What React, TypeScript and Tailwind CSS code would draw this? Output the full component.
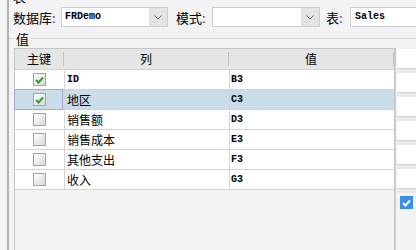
import React from 'react';

const rows = [
  { key: true, col: 'ID', val: 'B3' },
  { key: true, col: '地区', val: 'C3', selected: true },
  { key: false, col: '销售额', val: 'D3' },
  { key: false, col: '销售成本', val: 'E3' },
  { key: false, col: '其他支出', val: 'F3' },
  { key: false, col: '收入', val: 'G3' },
];

const isLatin = (s: string) => /^[\x00-\x7F]+$/.test(s);

const Colon = () => <span className="text-[#8a1a9a]">:</span>;

const Chevron = () => (
  <svg width="8" height="5" viewBox="0 0 8 5">
    <path d="M0.5 0.5 L4 4 L7.5 0.5" stroke="#6e6e6e" strokeWidth="1" fill="none" />
  </svg>
);

const Combo: React.FC<{ width: string; value?: string }> = ({ width, value }) => (
  <div className={`flex h-full shrink-0 ${width} border border-[#cfcfcf] bg-white`}>
    <div className="flex flex-1 items-center pl-[3px] font-['Liberation_Mono',monospace] text-[10px] font-bold">
      {value}
    </div>
    <div className="flex w-[18px] items-center justify-center bg-[#e3e3e3]">
      <Chevron />
    </div>
  </div>
);

const CheckBox: React.FC<{ checked: boolean }> = ({ checked }) => (
  <span className="flex h-[13px] w-[13px] items-center justify-center border border-[#a3a3a3] bg-linear-to-br from-white to-[#dadada]">
    {checked && (
      <svg width="9" height="8" viewBox="0 0 9 8">
        <path d="M1 4 L3.5 6.5 L8 1.5" stroke="#22a622" strokeWidth="2" fill="none" />
      </svg>
    )}
  </span>
);

const HeaderDivider = () => <div className="my-auto h-[14px] w-px bg-[#c2c2c2]" />;

export default function App() {
  return (
    <div className="h-[250px] w-[416px] overflow-hidden bg-[#f3f3f5] font-['Noto_Sans_CJK_SC',sans-serif] text-black">
      <div className="ml-[7px] flex h-full flex-col border-l-2 border-[#b3b3b3]">
        <div className="-mt-[10px] h-[14px] pl-[4px] text-[13px] leading-[14px]">表</div>

        {/* database / schema / table fields */}
        <div className="mt-[3px] flex h-[20px] shrink-0 items-center pl-[4px] text-[13px] leading-none">
          <span className="w-[48px] shrink-0">数据库<Colon /></span>
          <Combo width="w-[107px]" value="FRDemo" />
          <span className="ml-[8px] w-[36px] shrink-0">模式<Colon /></span>
          <Combo width="w-[108px]" />
          <span className="ml-[6px] w-[24px] shrink-0">表<Colon /></span>
          <div className="flex h-full w-[90px] shrink-0 items-center border border-[#cfcfcf] bg-white pl-[4px] font-['Liberation_Mono',monospace] text-[10px] font-bold">
            Sales
          </div>
        </div>

        {/* 值 group title */}
        <div className="mt-[1px] flex h-[20px] shrink-0 items-center">
          <div className="h-px w-[5px] bg-[#d6d6d6]" />
          <span className="px-[2px] text-[13px] leading-none">值</span>
          <div className="h-px flex-1 bg-[#d6d6d6]" />
        </div>

        <div className="flex min-h-0 flex-1">
          {/* table */}
          <div className="ml-[5px] flex w-[381px] shrink-0 flex-col border-x border-t border-[#c6c6c6] text-[12px]">
            <div className="flex h-[21px] shrink-0 border-b border-[#d2d2d2] bg-[#e5e5e5]">
              <div className="flex w-[48px] items-center justify-center">主键</div>
              <HeaderDivider />
              <div className="flex w-[164px] items-center justify-center">列</div>
              <HeaderDivider />
              <div className="flex flex-1 items-center justify-center">值</div>
              <HeaderDivider />
            </div>
            {rows.map((r) => (
              <div
                key={r.col}
                className={`flex h-[20px] shrink-0 border-b border-[#d4d4d4] ${r.selected ? 'bg-[#c8dcea]' : 'bg-white'}`}
              >
                <div className="relative flex w-[50px] items-center justify-center border-r border-[#d4d4d4]">
                  <CheckBox checked={r.key} />
                  {r.selected && (
                    <div className="absolute -top-px right-px -bottom-px -left-px border border-[#a6a6d8]" />
                  )}
                </div>
                <div
                  className={`flex w-[165px] items-center border-r border-[#d4d4d4] pl-[2px] ${
                    isLatin(r.col) ? "font-['Liberation_Mono',monospace] text-[10px] font-bold" : ''
                  }`}
                >
                  {r.col}
                </div>
                <div className="flex flex-1 items-center pl-[1px] font-['Liberation_Mono',monospace] text-[10px] font-bold">
                  {r.val}
                </div>
              </div>
            ))}
          </div>

          {/* right button strip */}
          <div className="flex flex-1 flex-col border-l border-[#cfcfcf] pt-px pl-px">
            {[0, 1, 2, 3, 4, 5].map((i) => (
              <div key={i} className="flex flex-col">
                <div className="h-[19px] bg-white" />
                <div className="h-px bg-[#d6d6d6]" />
                <div className="h-[4px] bg-[#e9e9eb]" />
              </div>
            ))}
            <div className="mt-[3px] ml-[3px] flex h-[13px] w-[13px] items-center justify-center bg-[#3d8eea]">
              <svg width="9" height="8" viewBox="0 0 9 8">
                <path d="M1 4 L3.5 6.5 L8 1.5" stroke="#ffffff" strokeWidth="2" fill="none" />
              </svg>
            </div>
          </div>
        </div>
      </div>
    </div>
  );
}
